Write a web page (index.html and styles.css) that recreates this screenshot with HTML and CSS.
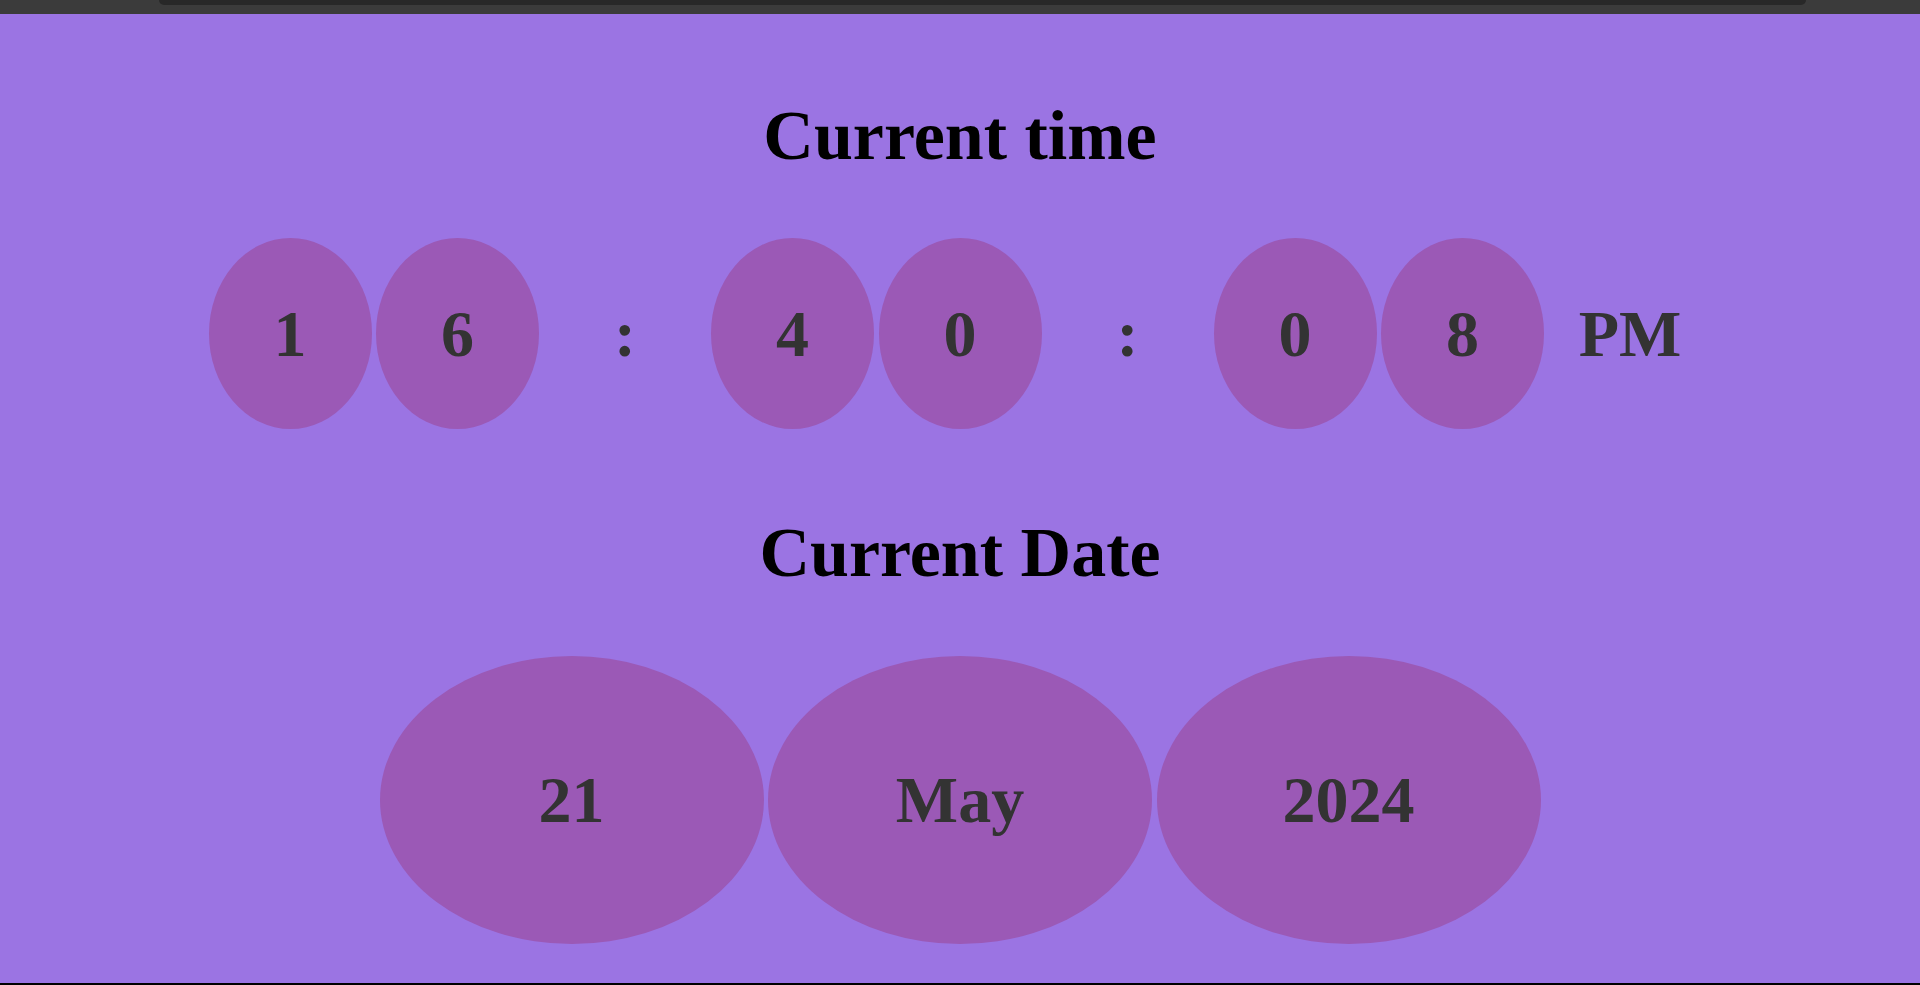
FILE: index.html
```html
<!DOCTYPE html>
<html lang="en">
<head>
<meta charset="utf-8">
<title>Current time</title>
<link rel="stylesheet" href="styles.css">
</head>
<body>
<div class="page">
  <div class="topbar"><div class="topbar-tab"></div></div>
  <main class="content">
    <h1 class="heading heading-time">Current time</h1>
    <div class="row row-time">
      <div class="bubble bubble-sm">1</div>
      <div class="bubble bubble-sm">6</div>
      <div class="bubble bubble-sm bubble-plain">:</div>
      <div class="bubble bubble-sm">4</div>
      <div class="bubble bubble-sm">0</div>
      <div class="bubble bubble-sm bubble-plain">:</div>
      <div class="bubble bubble-sm">0</div>
      <div class="bubble bubble-sm">8</div>
      <div class="bubble bubble-sm bubble-plain">PM</div>
    </div>
    <h1 class="heading heading-date">Current Date</h1>
    <div class="row row-date">
      <div class="bubble bubble-lg">21</div>
      <div class="bubble bubble-lg">May</div>
      <div class="bubble bubble-lg">2024</div>
    </div>
  </main>
</div>
</body>
</html>
```

FILE: styles.css
```css
html, body {
  margin: 0;
  padding: 0;
}

body {
  background: #9b74e3;
  font-family: "Liberation Serif", "Times New Roman", serif;
}

.page {
  height: 985px;
  display: flex;
  flex-direction: column;
  overflow: hidden;
}

.topbar {
  height: 14px;
  background: #3b3b3b;
  padding: 0 114px 0 159px;
  box-sizing: border-box;
  flex: none;
}

.topbar-tab {
  height: 5px;
  background: #282828;
  border-radius: 0 0 7px 7px;
}

.content {
  flex: 1;
  display: flex;
  flex-direction: column;
  align-items: center;
  border-bottom: 2px solid #000;
}

.heading {
  margin: 0;
  font-size: 70px;
  line-height: 80px;
  font-weight: bold;
  color: #000;
  text-align: center;
}

.heading-time {
  margin-top: 82px;
}

.heading-date {
  margin-top: 84px;
}

.row {
  display: flex;
  justify-content: center;
  gap: 4.5px;
}

.row-time {
  margin-top: 62px;
}

.row-date {
  margin-top: 63px;
}

.bubble {
  display: flex;
  align-items: center;
  justify-content: center;
  border-radius: 50%;
  background: #9b59b6;
  color: #333;
  font-weight: bold;
  font-size: 66px;
  line-height: 1;
}

.bubble-sm {
  width: 163px;
  height: 191px;
}

.bubble-lg {
  width: 384px;
  height: 288px;
}

.bubble-plain {
  background: transparent;
}
```
